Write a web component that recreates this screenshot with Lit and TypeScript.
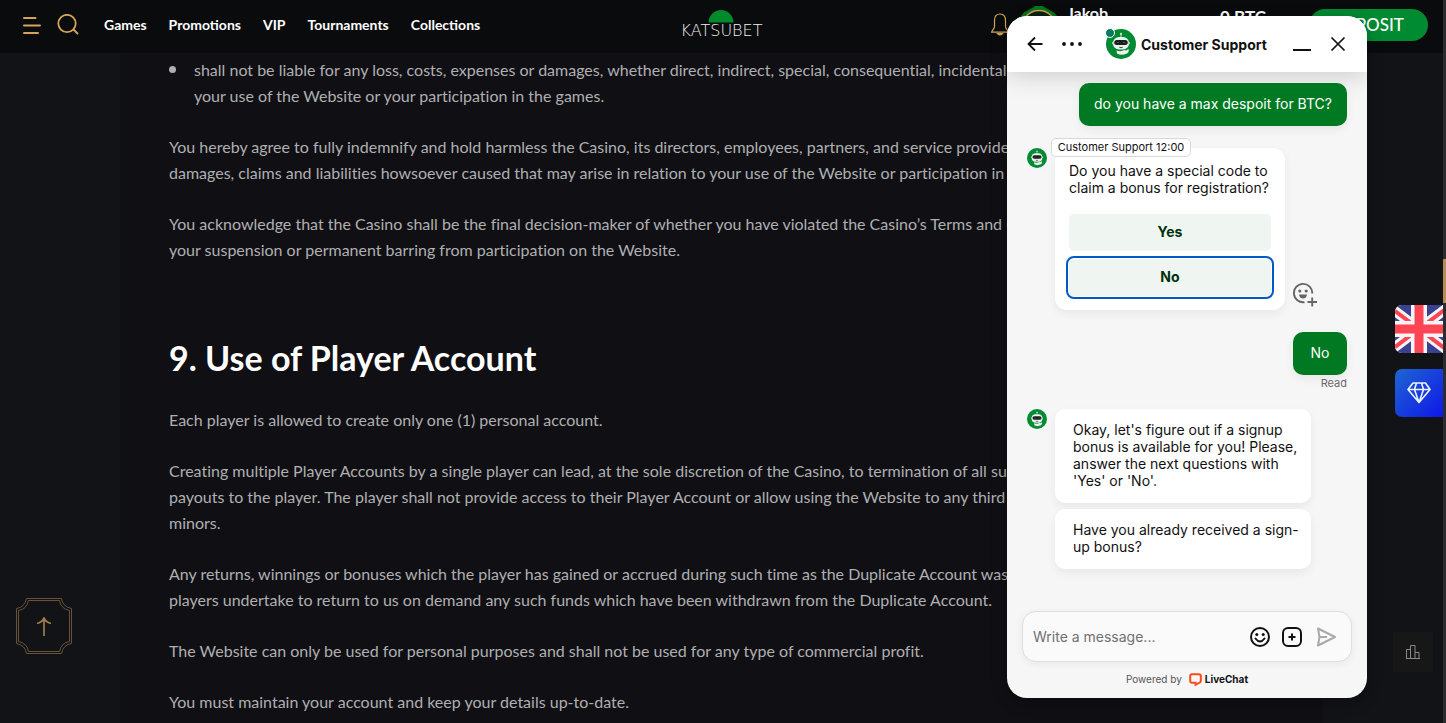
import { LitElement, html, css } from "lit";
import { customElement, state } from "lit/decorators.js";

const robot = (size: number) => html`
  <svg width=${size} height=${size} viewBox="0 0 30 30" aria-hidden="true">
    <circle cx="15" cy="15" r="15" fill="#008a32" />
    <path d="M15 4.500v4" stroke="#cfe9d8" stroke-width="1" />
    <circle cx="15" cy="4.800" r="1" fill="#d8efdf" />
    <path d="M10.500 21.500q4.500 1.500 8-.5l1.500.5 2.500-1.500q1 2.500-1.500 4.500-6 2.500-10 0z" fill="#eef2ef" />
    <rect x="7" y="8" width="16" height="12.500" rx="6" fill="#eef0ee" />
    <circle cx="7.500" cy="14" r="1.500" fill="#cdd3cf" />
    <circle cx="22.500" cy="14" r="1.500" fill="#cdd3cf" />
    <rect x="8.300" y="11" width="13.400" height="5" rx="2.500" fill="#15201b" />
    <path d="M11 13.800q1-1 2 0M17 13.800q1-1 2 0" stroke="#3c7a58" fill="none" stroke-width=".8" />
    <path d="M13.300 18.200q1.700 1.200 3.400 0" stroke="#222" fill="none" stroke-width=".9" />
  </svg>`;

@customElement("site-header")
export class SiteHeader extends LitElement {
  static styles = css`
    :host { display: block; }
    .bar {
      display: grid;
      grid-template-columns: 1fr auto 1fr;
      align-items: center;
      box-sizing: border-box;
      height: 53px;
      padding: 0 15px 4px;
      background: #090b0d;
      color: #fff;
      overflow: hidden;
    }
    .left { display: flex; align-items: center; padding-left: 7px; }
    .icon { display: flex; padding: 0; border: 0; background: none; margin-right: 15px; }
    .nav { display: flex; gap: 22px; margin-left: 10px; }
    .nav a { color: #fff; text-decoration: none; font-size: 14px; line-height: 20px; font-weight: 700; white-space: nowrap; }
    .logo { display: flex; flex-direction: column; align-items: center; color: #f1f1f1; text-decoration: none; }
    .word { font: 16px/16px "DejaVu Sans", sans-serif; font-weight: 200; }
    .right { display: flex; justify-content: flex-end; align-items: flex-start; padding-top: 2px; }
    .bell { margin-top: 7px; }
    .face { margin: 0 8px 0 10px; }
    .name { width: 153px; font-size: 16px; line-height: 14px; font-weight: 700; }
    .balance { width: 89px; margin-top: 3px; font-size: 17px; line-height: 16px; font-weight: 700; }
    .deposit {
      width: 119px; height: 32px; margin-top: 3px; border: 0; border-radius: 16px; padding: 0;
      background: #008a32; color: #fff; font: inherit; font-size: 17px; font-weight: 500;
    }
  `;
  render() {
    return html`<header class="bar">
      <div class="left">
        <button class="icon" aria-label="Menu">
          <svg width="20" height="20" viewBox="0 0 20 20" stroke="#d3a45a" stroke-width="2" stroke-linecap="round">
            <path d="M2 3h11.500M2 10.500h16M2 18h14" />
          </svg>
        </button>
        <button class="icon" aria-label="Search">
          <svg width="22" height="22" viewBox="0 0 22 22" fill="none" stroke="#d3a45a" stroke-width="1.800" stroke-linecap="round">
            <circle cx="10" cy="9.500" r="8.700" /><path d="M16.500 15.500l4 4" />
          </svg>
        </button>
        <nav class="nav">
          ${["Games", "Promotions", "VIP", "Tournaments", "Collections"].map((t) => html`<a href="#">${t}</a>`)}
        </nav>
      </div>
      <a class="logo" href="#">
        <svg width="26" height="13" viewBox="0 0 26 13" aria-hidden="true"><path d="M0.500 12.500a12.500 12.500 0 0 1 25 0z" fill="#008a2c" /></svg>
        <span class="word">KATSUBET</span>
      </a>
      <div class="right">
        <svg class="bell" width="18" height="24" viewBox="0 0 18 24" fill="none" stroke="#d3a45a" stroke-width="1.200" aria-hidden="true">
          <path d="M9 1C5 1 3.500 4 3.500 7.500v6C3.500 16 1 17 .7 19.200h16.600C17 17 14.500 16 14.500 13.500v-6C14.500 4 13 1 9 1z" />
          <path d="M6.500 20.500q2.500 3 5 0z" fill="#d3a45a" />
        </svg>
        <svg class="face" width="40" height="40" viewBox="0 0 40 40" aria-hidden="true">
          <path d="M14 1.500l2-1.500h8l2 1.500 9 5 5 6v16l-9 8H9l-9-8v-16l5-6z" fill="#00751f" />
          <circle cx="20" cy="21.500" r="17" fill="#0b2113" stroke="#cfa14f" stroke-width="1.500" />
        </svg>
        <span class="name">Jakob</span>
        <span class="balance">0 BTC</span>
        <button class="deposit">DEPOSIT</button>
      </div>
    </header>`;
  }
}

@customElement("terms-page")
export class TermsPage extends LitElement {
  static styles = css`
    :host { display: block; margin: 0 120px; background: #100f14; }
    .text {
      padding: 4px 50px 0 49px; color: #afafb1; font-size: 16px; line-height: 26px;
      font-variant-ligatures: none; white-space: nowrap; overflow: hidden;
    }
    p, ul { margin: 0 0 25px; }
    ul { list-style: none; padding: 0; }
    li { display: flex; gap: 18px; }
    li::before { content: ""; flex: none; width: 7px; height: 7px; margin-top: 9px; border-radius: 50%; background: #afafb1; }
    h2 { margin: 75px 0 29px; color: #fff; font-size: 34px; line-height: 40px; font-weight: 700; }
  `;
  render() {
    return html`<article class="text">
      <ul><li><span>shall not be liable for any loss, costs, expenses or damages, whether direct, indirect, special, consequential, incidental or otherwise,<br />your use of the Website or your participation in the games.</span></li></ul>
      <p>You hereby agree to fully indemnify and hold harmless the Casino, its directors, employees, partners, and service providers for any cost,<br />damages, claims and liabilities howsoever caused that may arise in relation to your use of the Website or participation in the games.</p>
      <p>You acknowledge that the Casino shall be the final decision-maker of whether you have violated the Casino’s Terms and Conditions,<br />your suspension or permanent barring from participation on the Website.</p>
      <h2>9. Use of Player Account</h2>
      <p>Each player is allowed to create only one (1) personal account.</p>
      <p>Creating multiple Player Accounts by a single player can lead, at the sole discretion of the Casino, to termination of all such accounts and<br />payouts to the player. The player shall not provide access to their Player Account or allow using the Website to any third party including<br />minors.</p>
      <p>Any returns, winnings or bonuses which the player has gained or accrued during such time as the Duplicate Account was active, and<br />players undertake to return to us on demand any such funds which have been withdrawn from the Duplicate Account.</p>
      <p>The Website can only be used for personal purposes and shall not be used for any type of commercial profit.</p>
      <p>You must maintain your account and keep your details up-to-date.</p>
    </article>`;
  }
}

@customElement("support-chat")
export class SupportChat extends LitElement {
  @state() private draft = "";
  static styles = css`
    :host {
      display: flex; flex-direction: column; overflow: hidden;
      border-radius: 20px; background: #f6f6f7; color: #111;
      font: 14px/17px Inter, sans-serif;
      box-shadow: 0 4px 16px rgba(0, 0, 0, 0.3);
    }
    button { font: inherit; color: inherit; border: 0; padding: 0; background: none; }
    svg { display: block; flex: none; }
    .head {
      display: flex; align-items: center; height: 56px; flex: none; padding: 0 20px;
      background: #fff; box-shadow: 0 4px 24px rgba(0, 0, 0, 0.17);
    }
    .dots { margin-left: 16px; }
    .who { position: relative; margin: 0 5px 0 23px; }
    .online { position: absolute; left: -1px; top: -1px; width: 8px; height: 8px; border-radius: 50%; background: #087a5d; border: 1px solid #fff; }
    .title { flex: 1; margin: 0; font-size: 14px; font-weight: 700; white-space: nowrap; }
    .close { margin-left: 16px; }
    .log { flex: 1; display: flex; flex-direction: column; padding: 11px 20px 0; }
    .bubble {
      padding: 12px 18px 14px; border-radius: 10px; background: #fff; white-space: nowrap;
      box-shadow: 0 4px 10px rgba(0, 0, 0, 0.06);
    }
    .mine {
      align-self: flex-end; box-sizing: border-box; min-width: 54px; padding: 12px 15px 14px;
      text-align: center; background: #007a22; color: #fff;
    }
    .row { display: flex; gap: 8px; }
    .first { margin-top: 22px; align-items: flex-end; }
    .face { align-self: flex-start; }
    .card { position: relative; box-sizing: border-box; width: 230px; padding: 14px; border-radius: 12px; background: #fff; box-shadow: 0 4px 10px rgba(0, 0, 0, 0.06); }
    .card p { margin: 0 0 18px; white-space: nowrap; }
    .tag {
      position: absolute; left: -4px; top: -10px; box-sizing: border-box; min-width: 140px; padding: 0 2px;
      border: 1px solid #d9d9db; border-radius: 5px; text-align: center;
      background: #fff; font-size: 11px; line-height: 17px; white-space: nowrap;
    }
    .choice { display: block; width: 202px; height: 37px; padding-bottom: 2px; border-radius: 5px; background: #eff6f2; color: #00310e; font-weight: 700; }
    .choice.on { margin-top: 8px; outline: 2px solid #0059c8; outline-offset: 1px; }
    .react { margin-bottom: 3px; }
    .answer { margin-top: 22px; }
    .read { align-self: flex-end; font-size: 11px; color: #6a6a6c; }
    .last { margin-top: 17px; }
    .stack { display: flex; flex-direction: column; gap: 6px; width: 256px; }
    .foot { padding: 0 15px 10px; }
    .compose {
      display: flex; align-items: center; gap: 12px; height: 49px; padding: 0 14px 0 10px;
      border: 1px solid #dededf; border-radius: 14px; background: #fafafa; box-shadow: 0 2px 8px rgba(0, 0, 0, 0.06);
    }
    .compose input { flex: 1; min-width: 0; padding: 0; border: 0; outline: 0; background: none; font: inherit; color: #111; }
    .compose input::placeholder { color: #707072; opacity: 1; }
    .power { display: flex; justify-content: center; align-items: center; gap: 7px; margin-top: 9px; font-size: 10px; color: #555; }
    .power a { display: flex; align-items: center; gap: 3px; color: #111; font-weight: 700; text-decoration: none; }
  `;
  render() {
    return html`
      <header class="head">
        <button aria-label="Back"><svg width="16" height="16" viewBox="0 0 16 16" fill="none" stroke="#111" stroke-width="1.800"><path d="M15.500 8H2M8 1.500L1.500 8 8 14.500" /></svg></button>
        <button class="dots" aria-label="More"><svg width="24" height="8" viewBox="0 0 24 8" fill="#111"><circle cx="5" cy="4" r="1.900" /><circle cx="13" cy="4" r="1.900" /><circle cx="21" cy="4" r="1.900" /></svg></button>
        <span class="who">${robot(30)}<i class="online"></i></span>
        <h1 class="title">Customer Support</h1>
        <button aria-label="Minimize"><svg width="20" height="20" viewBox="0 0 20 20" stroke="#111" stroke-width="2"><path d="M0 16h18" /></svg></button>
        <button class="close" aria-label="Close"><svg width="18" height="18" viewBox="0 0 18 18" stroke="#111" stroke-width="1.700"><path d="M2.500 2.500l13 13M15.500 2.500l-13 13" /></svg></button>
      </header>
      <section class="log">
        <div class="bubble mine">do you have a max despoit for BTC?</div>
        <div class="row first">
          <span class="face">${robot(20)}</span>
          <div class="card">
            <span class="tag">Customer Support 12:00</span>
            <p>Do you have a special code to<br />claim a bonus for registration?</p>
            <button class="choice">Yes</button>
            <button class="choice on">No</button>
          </div>
          <button class="react" aria-label="Add reaction">
            <svg width="24" height="25" viewBox="0 0 24 25" fill="none" stroke="#666" stroke-width="1.900">
              <path d="M11.500 20.200A9.200 9.200 0 1 1 19.300 11.500M14.500 20h9.500M19.200 15.500v9" />
              <circle cx="6.800" cy="9" r="1.600" fill="#666" stroke="none" /><circle cx="13.200" cy="9" r="1.600" fill="#666" stroke="none" />
              <path d="M6 12.500h8q-.5 4-4 4t-4-4z" fill="#666" stroke="none" />
            </svg>
          </button>
        </div>
        <div class="bubble mine answer">No</div>
        <span class="read">Read</span>
        <div class="row last">
          <span class="face">${robot(20)}</span>
          <div class="stack">
            <div class="bubble">Okay, let's figure out if a signup<br />bonus is available for you! Please,<br />answer the next questions with<br />'Yes' or 'No'.</div>
            <div class="bubble">Have you already received a sign-<br />up bonus?</div>
          </div>
        </div>
      </section>
      <footer class="foot">
        <div class="compose">
          <input type="text" aria-label="Message" placeholder="Write a message..." .value=${this.draft}
            @input=${(e: Event) => (this.draft = (e.target as HTMLInputElement).value)} />
          <button aria-label="Emoji"><svg width="20" height="20" viewBox="0 0 20 20" fill="none" stroke="#111" stroke-width="2"><circle cx="10" cy="10" r="9" /><path d="M5.500 11.500q4.500 6 9 0" stroke-linecap="round" /><circle cx="6.800" cy="7.500" r="1.500" fill="#111" stroke="none" /><circle cx="13.200" cy="7.500" r="1.500" fill="#111" stroke="none" /></svg></button>
          <button aria-label="Attach"><svg width="20" height="20" viewBox="0 0 20 20" fill="none" stroke="#111" stroke-width="2"><rect x="1" y="1" width="18" height="18" rx="5" /><path d="M10 6.500v7M6.500 10h7" /></svg></button>
          <button aria-label="Send"><svg width="23" height="20" viewBox="0 0 23 20" fill="none" stroke="#a9a9ab" stroke-width="2" stroke-linejoin="round"><path d="M4 1.500L21 10 4 18.500 5.500 10zM5.500 10H13" /></svg></button>
        </div>
        <div class="power">Powered by
          <a href="#"><svg width="13" height="13" viewBox="0 0 13 13" fill="none" stroke="#ff4a1c" stroke-width="2"><path d="M3 1.200h7q1.800 0 1.800 1.800v5q0 1.300-1.300 1.600L6.500 11.800V9.800H3Q1.200 9.800 1.200 8V3Q1.200 1.200 3 1.200z" /></svg>LiveChat</a>
        </div>
      </footer>`;
  }
}

@customElement("app-root")
export class AppRoot extends LitElement {
  static styles = css`
    :host { display: flex; position: relative; height: 100vh; overflow: hidden; background: #111317; font-family: Lato, sans-serif; }
    .page { flex: 1; min-width: 0; display: flex; flex-direction: column; }
    terms-page { flex: 1; min-height: 0; overflow: hidden; }
    .track { width: 3px; background: #2d2d30; }
    .thumb { height: 44px; margin-top: 259px; background: #b68d54; }
    .top { position: absolute; left: 16px; bottom: 69px; padding: 0; border: 0; background: none; display: flex; }
    .side { position: absolute; right: 3px; top: 305px; display: flex; flex-direction: column; gap: 16px; }
    .side button { display: flex; align-items: center; justify-content: center; width: 48px; height: 48px; padding: 0; border: 0; border-radius: 7px 0 0 7px; overflow: hidden; }
    .gem { background: linear-gradient(135deg, #1f66d2, #0e17e8); }
    .stats { position: absolute; right: 13px; bottom: 51px; width: 40px; height: 40px; padding: 0; border: 0; background: #171717; display: flex; align-items: center; justify-content: center; }
    support-chat { position: absolute; right: 79px; top: 16px; bottom: 25px; width: 360px; }
  `;
  render() {
    return html`
      <main class="page"><site-header></site-header><terms-page></terms-page></main>
      <div class="track"><div class="thumb"></div></div>
      <button class="top" aria-label="Back to top">
        <svg width="56" height="56" viewBox="0 0 56 56" fill="none" stroke="#6b5039" stroke-width="1">
          <path d="M10.500 .5h35q1 8 10 10v35q-8 1-10 10h-35q-1-8-10-10v-35q8-1 10-10z" />
          <path d="M12.500 2.500h31q1 8 10 10v31q-8 1-10 10h-31q-1-8-10-10v-31q8-1 10-10z" />
          <path d="M28 38V20M21 25.500q6-1.500 7-6 1 4.500 7 6" stroke="#9c7d4c" stroke-width="1.700" />
        </svg>
      </button>
      <div class="side">
        <button aria-label="English">
          <svg width="48" height="48" viewBox="0 0 48 48" aria-hidden="true">
            <rect width="48" height="48" fill="#3b4191" />
            <path d="M-8 0l64 48M56 0L-8 48" stroke="#f4f4f6" stroke-width="10" />
            <path d="M-8 0l64 48M56 0L-8 48" stroke="#ff4453" stroke-width="4" />
            <path d="M24 0v48M0 24h48" stroke="#f4f4f6" stroke-width="16" />
            <path d="M24 0v48M0 24h48" stroke="#ff4453" stroke-width="9" />
          </svg>
        </button>
        <button class="gem" aria-label="Rewards">
          <svg width="24" height="22" viewBox="0 0 24 22" fill="none" stroke="#eef2ff" stroke-width="1.600" stroke-linejoin="round">
            <path d="M6 1h12.500l4.500 6.500L12 20.500 1 7.500zM1 7.500h22M9.500 1L7.500 7.500 12 20.500 16.500 7.500 14.500 1" />
          </svg>
        </button>
      </div>
      <button class="stats" aria-label="Statistics">
        <svg width="14" height="14" viewBox="0 0 14 14" fill="none" stroke="#8a8a8c" stroke-width="1"><path d="M.5 13.500v-9h4v9M4.500 13.500V.5h4.500v13M9 7.500h4v6M0 13.500h14" /></svg>
      </button>
      <support-chat></support-chat>`;
  }
}
